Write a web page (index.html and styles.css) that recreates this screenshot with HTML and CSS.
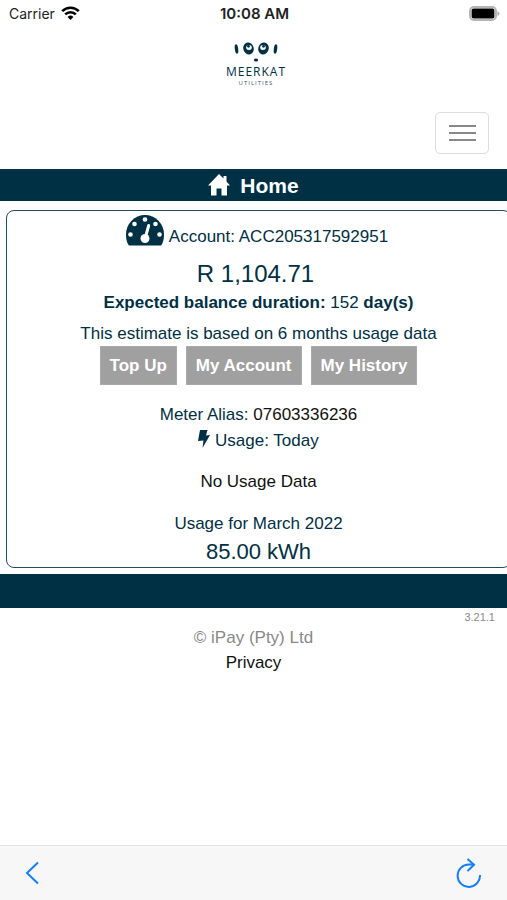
FILE: index.html
```html
<!DOCTYPE html>
<html lang="en">
<head>
<meta charset="utf-8">
<meta name="viewport" content="width=device-width, initial-scale=1">
<title>Meerkat Utilities</title>
<link rel="stylesheet" href="styles.css">
</head>
<body>
<div class="status">
  <div class="carrier">Carrier
    <svg width="19" height="14" viewBox="0 0 19 14" aria-hidden="true"><g fill="none" stroke="#000" stroke-width="2.6"><path d="M1.2 5.2a11.8 11.8 0 0 1 16.6 0"/><path d="M4.2 8.4a7.6 7.6 0 0 1 10.6 0"/></g><path d="M9.5 14 6.6 10.9a4.2 4.2 0 0 1 5.8 0z"/></svg>
  </div>
  <div class="clock">10:08 AM</div>
  <svg class="battery" width="31" height="15" viewBox="0 0 31 15" aria-hidden="true"><rect x="1" y="1" width="26" height="13" rx="4" fill="#fff" stroke="#b4b4b4" stroke-width="2"/><rect x="2.6" y="2.6" width="22.8" height="9.8" rx="2" fill="#000"/><path d="M28.5 5v5q2-1 2-2.5t-2-2.5z" fill="#aaa"/></svg>
</div>
<header class="header">
  <div class="logo">
    <svg width="44" height="20" viewBox="0 0 44 20" aria-hidden="true"><g fill="#003044"><ellipse cx="2.5" cy="7" rx="1.7" ry="4.7" transform="rotate(-8 2.5 7)"/><ellipse cx="41.5" cy="7" rx="1.7" ry="4.7" transform="rotate(8 41.5 7)"/><ellipse cx="14.5" cy="6.5" rx="5.2" ry="6" transform="rotate(-18 14.5 6.5)"/><ellipse cx="29.5" cy="6.5" rx="5.2" ry="6" transform="rotate(18 29.5 6.5)"/><ellipse cx="22" cy="18" rx="2.2" ry="1.5"/></g><g fill="#fff"><ellipse cx="15" cy="5.5" rx="2.8" ry="2.5"/><ellipse cx="29" cy="5.5" rx="2.8" ry="2.5"/></g><g fill="#003044"><circle cx="14.5" cy="4.3" r="1.4"/><circle cx="29.5" cy="4.3" r="1.4"/></g></svg>
    <div class="brand">MEERKAT</div>
    <div class="brand-sub">UTILITIES</div>
  </div>
  <button class="menu" type="button" aria-label="Menu"><span></span><span></span><span></span></button>
</header>
<h1 class="title">
  <svg width="22" height="22" viewBox="0 0 22 22" aria-hidden="true"><path fill="#fff" d="M11 0l4.500 4.500V2h3v5.500L22 11.500h-3V21.500h-5.500v-7h-5v7H3V11.500H0z"/></svg>
  Home
</h1>
<main class="card">
  <div class="account">
    <svg width="38" height="31" viewBox="0 0 38 31" aria-hidden="true"><path fill="#003044" d="M3 30.500Q0 27 0 19.500a19 19.500 0 0 1 38 0Q38 27 35 30.500z"/><g fill="#fff"><circle cx="4.5" cy="19.5" r="2.3"/><circle cx="8.5" cy="9" r="2.3"/><circle cx="19" cy="4.5" r="2.3"/><circle cx="29.5" cy="9" r="2.3"/><circle cx="33.5" cy="19.5" r="2.3"/><circle cx="19" cy="23.5" r="4.5"/></g><path d="M19.500 22l3.200-11.500" stroke="#fff" stroke-width="3" stroke-linecap="round"/></svg>
    <span>Account: ACC205317592951</span>
  </div>
  <div class="balance">R 1,104.71</div>
  <div class="duration"><b>Expected balance duration:</b> 152 <b>day(s)</b></div>
  <div class="estimate">This estimate is based on 6 months usage data</div>
  <div class="actions">
    <button type="button">Top Up</button>
    <button type="button">My Account</button>
    <button type="button">My History</button>
  </div>
  <div>Meter Alias: <span class="dark">07603336236</span></div>
  <div><svg width="12" height="18" viewBox="0 0 12 18" aria-hidden="true"><path fill="#003044" d="M2 0H9.500L8 5.500 12 5 4.500 18 5.500 10.500 0 11z"/></svg> Usage: Today</div>
  <div class="empty dark">No Usage Data</div>
  <div>Usage for March 2022</div>
  <div class="total">85.00 kWh</div>
</main>
<div class="band"></div>
<footer class="footer">
  <div class="version">3.21.1</div>
  <div>© iPay (Pty) Ltd</div>
  <a href="#">Privacy</a>
</footer>
<nav class="toolbar">
  <button type="button" aria-label="Back"><svg width="14" height="24" viewBox="0 0 14 24"><path d="M13 1.500 2 12l11 10.500" fill="none" stroke="#157efb" stroke-width="2"/></svg></button>
  <button type="button" aria-label="Reload"><svg width="26" height="30" viewBox="0 0 26 30"><g fill="none" stroke="#157efb" stroke-width="2"><path d="M24 17a11.200 11.200 0 1 1-11.200-10.500h5.500"/><path d="M11.500 1l6.500 5.800-6.500 6.200"/></g></svg></button>
</nav>
</body>
</html>
```

FILE: styles.css
```css
* { box-sizing: border-box; }
body {
  margin: 0;
  min-height: 100vh;
  display: flex;
  flex-direction: column;
  overflow-x: hidden;
  background: #fff;
  color: #003044;
  font: 17px/26px "Liberation Sans", Arial, sans-serif;
}
button { font: inherit; cursor: pointer; }
.status {
  display: grid;
  grid-template-columns: 1fr auto 1fr;
  align-items: center;
  height: 28px;
  padding: 0 7px 0 9px;
  color: #222;
  font: 15px/28px Inter, sans-serif;
}
.carrier { display: flex; align-items: center; gap: 6px; height: 26px; font-size: 14px; }
.carrier svg { margin-bottom: 2px; }
.clock { font-weight: 600; }
.battery { justify-self: end; margin-bottom: 2px; }
.header { display: flex; flex-direction: column; padding: 14px 18px 15px; }
.logo { align-self: center; padding-left: 5px; text-align: center; }
.logo svg { display: block; margin: 0 auto; }
.brand { font: 12px/16px "Open Sans", sans-serif; letter-spacing: 1px; margin-top: 2px; }
.brand-sub { font: 6px/6px "Open Sans", sans-serif; letter-spacing: 1px; color: #405c68; }
.menu {
  align-self: flex-end;
  display: flex;
  flex-direction: column;
  align-items: center;
  justify-content: center;
  gap: 5px;
  width: 54px;
  height: 42px;
  margin-top: 26px;
  background: #fff;
  border: 1px solid #ddd;
  border-radius: 5px;
}
.menu span { width: 27px; height: 2px; background: #888; }
.title {
  display: flex;
  align-items: center;
  justify-content: center;
  gap: 10px;
  height: 32px;
  margin: 0;
  padding-top: 2px;
  background: #003044;
  color: #fff;
  font-size: 21px;
}
.title svg { margin-bottom: 3px; }
.card {
  margin: 9px -4px 6px 6px;
  padding: 4px 0 1px;
  border: 1px solid #1f4c60;
  border-radius: 8px;
  text-align: center;
}
.account { display: flex; justify-content: center; gap: 5px; height: 44px; margin-right: 3px; }
.account span { padding-top: 9px; }
.balance { margin-right: 6px; font-size: 24px; line-height: 30px; }
.duration { line-height: 28px; margin-bottom: 4px; }
.estimate { line-height: 25px; }
.actions { display: flex; justify-content: center; gap: 9px; margin-bottom: 17px; }
.actions button {
  height: 39px;
  padding: 0 9px;
  border: 1px solid #aaa;
  background: #a0a0a0;
  color: #fff;
  font-weight: bold;
}
.card div > svg { flex: none; vertical-align: -2px; }
.dark { color: #111; }
.empty { margin: 15px 0 16px; }
.total { font-size: 22px; line-height: 29px; }
.band { height: 34px; background: #003044; }
.footer { text-align: center; color: #888; line-height: 25px; }
.footer a { color: #111; text-decoration: none; }
.version { padding: 2px 12px 0; text-align: right; font-size: 11px; line-height: 15px; }
.toolbar {
  display: flex;
  justify-content: space-between;
  height: 55px;
  margin-top: auto;
  padding: 10px 25px 10px;
  background: #f7f7f7;
  border-top: 1px solid #e2e2e2;
}
.toolbar button { display: flex; align-items: center; padding: 0; border: 0; background: none; }
```
